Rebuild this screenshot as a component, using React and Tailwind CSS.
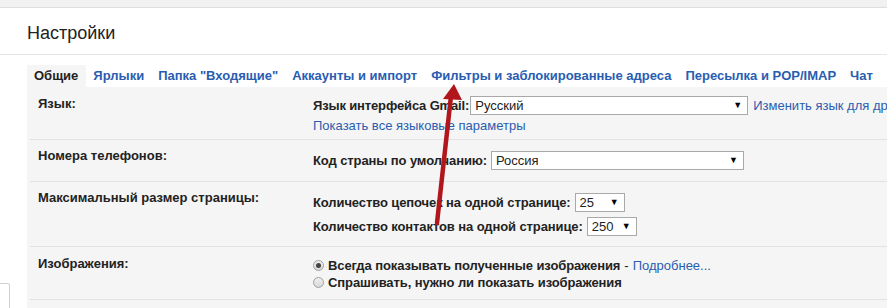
import React from "react";

const F = { fontFamily: '"Liberation Sans", Arial, sans-serif' };

function Select({ value, w }) {
  return (
    <div
      className={`inline-flex items-center justify-between h-[19px] bg-white border border-[#a9a9a9] pl-[4px] pr-[5px] text-[13px] text-[#222] font-normal tracking-normal ${w}`}
    >
      <span>{value}</span>
      <span className="text-[9px] leading-none text-black">▼</span>
    </div>
  );
}

function Radio({ checked }) {
  return (
    <span className="inline-flex items-center justify-center w-[11px] h-[11px] rounded-full border border-[#a0a0a0] bg-gradient-to-b from-[#f0f0f0] to-[#d8d8d8] mr-[4px]">
      {checked && <span className="w-[5px] h-[5px] rounded-full bg-[#444]" />}
    </span>
  );
}

const tabs = [
  "Ярлыки",
  'Папка "Входящие"',
  "Аккаунты и импорт",
  "Фильтры и заблокированные адреса",
  "Пересылка и POP/IMAP",
  "Чат",
];

export default function App() {
  return (
    <div
      style={F}
      className="relative w-[887px] h-[308px] overflow-hidden bg-white text-[13px] text-[#222]"
    >
      <div className="h-[8px] bg-[#f1f1f1] border-b border-[#dedede]" />
      <div className="h-[47px] border-b border-[#e5e5e5] pl-[27px] pt-[13px] text-[18px] leading-[24px] text-[#222]">
        Настройки
      </div>
      <div className="flex pl-[27px] mt-[10px] h-[22px] font-bold text-[13px] leading-[22px] whitespace-nowrap">
        <div className="pl-[7px] pr-[8px] bg-[#f5f5f5] text-[#222]">Общие</div>
        {tabs.map((t) => (
          <div key={t} className="px-[7px] text-[#2a5db0]">
            {t}
          </div>
        ))}
      </div>
      <div className="ml-[27px] bg-[#f5f5f5] h-[240px] pl-[3px]">
        {/* Row 1 */}
        <div className="flex h-[53px] border-b border-[#e2e2e2]">
          <div className="w-[283px] pl-[8px] pt-[9px] font-bold leading-[16px]">Язык:</div>
          <div className="flex-1 pt-[9px] whitespace-nowrap overflow-hidden">
            <div className="flex items-center h-[19px]">
              <span className="font-bold tracking-[-0.15px]">Язык интерфейса Gmail:</span>
              <span className="ml-[1px]">
                <Select value="Русский" w="w-[278px]" />
              </span>
              <span className="ml-[5px] text-[#2a5db0]">Изменить язык для других пользователей</span>
            </div>
            <div className="mt-[3px] leading-[16px] text-[#2a5db0]">Показать все языковые параметры</div>
          </div>
        </div>
        {/* Row 2 */}
        <div className="flex h-[42px] border-b border-[#e2e2e2]">
          <div className="w-[283px] pl-[8px] pt-[8px] font-bold leading-[16px]">Номера телефонов:</div>
          <div className="flex-1 pt-[11px] whitespace-nowrap">
            <div className="flex items-center h-[19px]">
              <span className="font-bold tracking-[-0.1px]">Код страны по умолчанию:</span>
              <span className="ml-[4px]">
                <Select value="Россия" w="w-[253px]" />
              </span>
            </div>
          </div>
        </div>
        {/* Row 3 */}
        <div className="flex h-[65px] border-b border-[#e2e2e2]">
          <div className="w-[283px] pl-[8px] pt-[8px] font-bold leading-[16px]">Максимальный размер страницы:</div>
          <div className="flex-1 pt-[11px] whitespace-nowrap">
            <div className="flex items-center h-[19px]">
              <span className="font-bold tracking-[-0.1px]">Количество цепочек на одной странице:</span>
              <span className="ml-[4px]">
                <Select value="25" w="w-[50px]" />
              </span>
            </div>
            <div className="flex items-center h-[19px] mt-[5px]">
              <span className="font-bold tracking-[-0.1px]">Количество контактов на одной странице:</span>
              <span className="ml-[4px]">
                <Select value="250" w="w-[50px]" />
              </span>
            </div>
          </div>
        </div>
        {/* Row 4 */}
        <div className="flex h-[53px] border-b border-[#e2e2e2]">
          <div className="w-[283px] pl-[8px] pt-[9px] font-bold leading-[16px]">Изображения:</div>
          <div className="flex-1 pt-[10px] whitespace-nowrap leading-[17px]">
            <div className="flex items-center">
              <Radio checked />
              <span className="font-bold tracking-[-0.1px]">Всегда показывать полученные изображения</span>
              <span className="ml-[4px]">-</span>
              <span className="ml-[4px] text-[#2a5db0]">Подробнее...</span>
            </div>
            <div className="flex items-center">
              <Radio />
              <span className="font-bold tracking-[-0.1px]">Спрашивать, нужно ли показать изображения</span>
            </div>
          </div>
        </div>
      </div>

      {/* bottom-left widget */}
      <div className="absolute left-[-2px] top-[283px] w-[12px] h-[30px] bg-white border border-[#d0d0d0] rounded-[2px]" />

      {/* red arrow */}
      <svg className="absolute left-0 top-0 pointer-events-none" width="887" height="308">
        <line x1="437" y1="223" x2="451" y2="96" stroke="#b0161b" strokeWidth="4.5" strokeLinecap="round" />
        <polygon points="454,84 443,99 462,100" fill="#b0161b" />
      </svg>
    </div>
  );
}
